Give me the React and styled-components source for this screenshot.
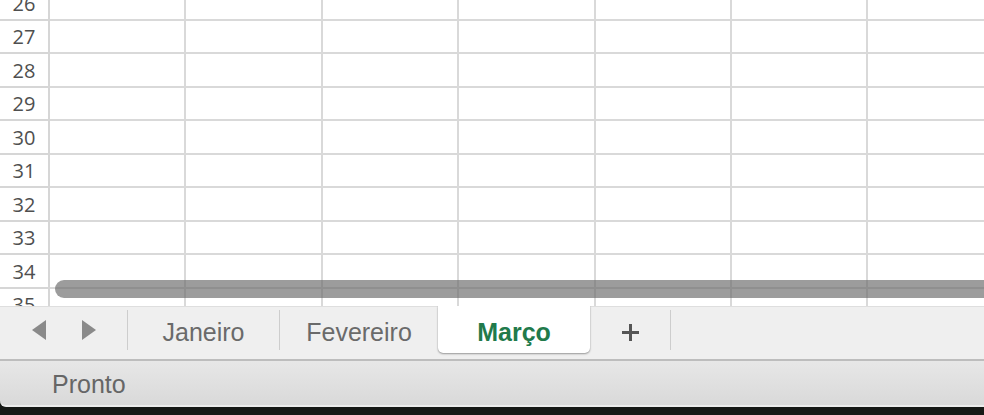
import React from 'react';
import styled, { createGlobalStyle } from 'styled-components';

// style //
const GlobalStyle = createGlobalStyle`
    html, body {
        margin: 0;
        padding: 0;
        background: #161916;
        overflow: hidden;
    }
    * { box-sizing: border-box; }
`;

const Window = styled.div`
    width: 984px;
    height: 415px;
    display: flex;
    flex-direction: column;
    background: #161916;
    font-family: "Liberation Sans", Arial, sans-serif;
`;

const Sheet = styled.div`
    position: relative;
    height: 306px;
    overflow: hidden;
    background: #FFFFFF;
`;

const Grid = styled.div`
    display: grid;
    grid-template-columns: 50px repeat(7, 136.4px);
    grid-auto-rows: 33.5px;
    margin-top: -13px;
`;

const RowHeader = styled.div`
    display: flex;
    align-items: center;
    justify-content: center;
    padding-top: 1px;
    border-right: 2px solid #d6d6d6;
    border-bottom: 2px solid #d6d6d6;
    font-family: "Open Sans", "Liberation Sans", sans-serif;
    font-size: 20px;
    color: #4f4f4f;
`;

const Cell = styled.div`
    border-right: 2px solid #d9d9d9;
    border-bottom: 2px solid #d9d9d9;
`;

const ScrollThumb = styled.div`
    position: absolute;
    left: 55px;
    right: -20px;
    top: 280px;
    height: 18px;
    border-radius: 9px;
    background: rgba(105, 105, 105, 0.66);
`;

const TabBar = styled.div`
    display: flex;
    align-items: flex-start;
    height: 55px;
    background: #efefef;
    border-top: 1px solid #dedede;
    border-bottom: 2px solid #bdbdbd;
`;

const Nav = styled.div`
    display: flex;
    align-items: center;
    gap: 34px;
    width: 127px;
    height: 46px;
    padding-left: 31px;
`;

const Arrow = styled.svg`
    width: 16px;
    height: 20px;
    fill: #8a8a8a;
`;

const Divider = styled.div`
    width: 1px;
    height: 40px;
    margin-top: 3px;
    background: #cdcdcd;
`;

const Tab = styled.div`
    display: flex;
    align-items: center;
    justify-content: center;
    width: ${props => props.width}px;
    height: 47px;
    margin-top: -1px;
    padding-top: 5px;
    font-size: 25px;
    font-weight: ${props => props.active ? 700 : 400};
    color: ${props => props.active ? '#217a4b' : '#6a6a6a'};
    background: ${props => props.active ? '#FFFFFF' : 'transparent'};
    border-radius: 0px 0px 5px 5px;
    box-shadow: ${props => props.active ? '0px 1px 2px rgba(0,0,0,0.35), 0px 0px 1px rgba(0,0,0,0.25)' : 'none'};
`;

const Plus = styled.svg`
    width: 17px;
    height: 17px;
    stroke: #555555;
    stroke-width: 3;
`;

const StatusBar = styled.div`
    display: flex;
    align-items: center;
    height: 46px;
    padding: 3px 0px 0px 52px;
    background: linear-gradient(#e7e7e7, #d9d9d9);
    border-bottom: 2px solid #ececec;
    border-bottom-left-radius: 6px;
    font-size: 25px;
    color: #666666;
`;

const rows = [26, 27, 28, 29, 30, 31, 32, 33, 34, 35];
const columns = [0, 1, 2, 3, 4, 5, 6];

// function //
function App() {
    return (
        <Window>
            <GlobalStyle />
            <Sheet>
                <Grid>
                    {rows.map(r => (
                        <React.Fragment key={r}>
                            <RowHeader>{r}</RowHeader>
                            {columns.map(c => <Cell key={c} />)}
                        </React.Fragment>
                    ))}
                </Grid>
                <ScrollThumb />
            </Sheet>
            <TabBar>
                <Nav>
                    <Arrow viewBox="0 0 16 20"><polygon points="15,0 15,20 1,10" /></Arrow>
                    <Arrow viewBox="0 0 16 20"><polygon points="1,0 1,20 15,10" /></Arrow>
                </Nav>
                <Divider />
                <Tab width={151}>Janeiro</Tab>
                <Divider />
                <Tab width={158}>Fevereiro</Tab>
                <Tab width={152} active>Março</Tab>
                <Tab width={80}>
                    <Plus viewBox="0 0 17 17"><line x1="8.5" y1="0" x2="8.5" y2="17" /><line x1="0" y1="8.5" x2="17" y2="8.5" /></Plus>
                </Tab>
                <Divider />
            </TabBar>
            <StatusBar>Pronto</StatusBar>
        </Window>
    );
}

export default App;
